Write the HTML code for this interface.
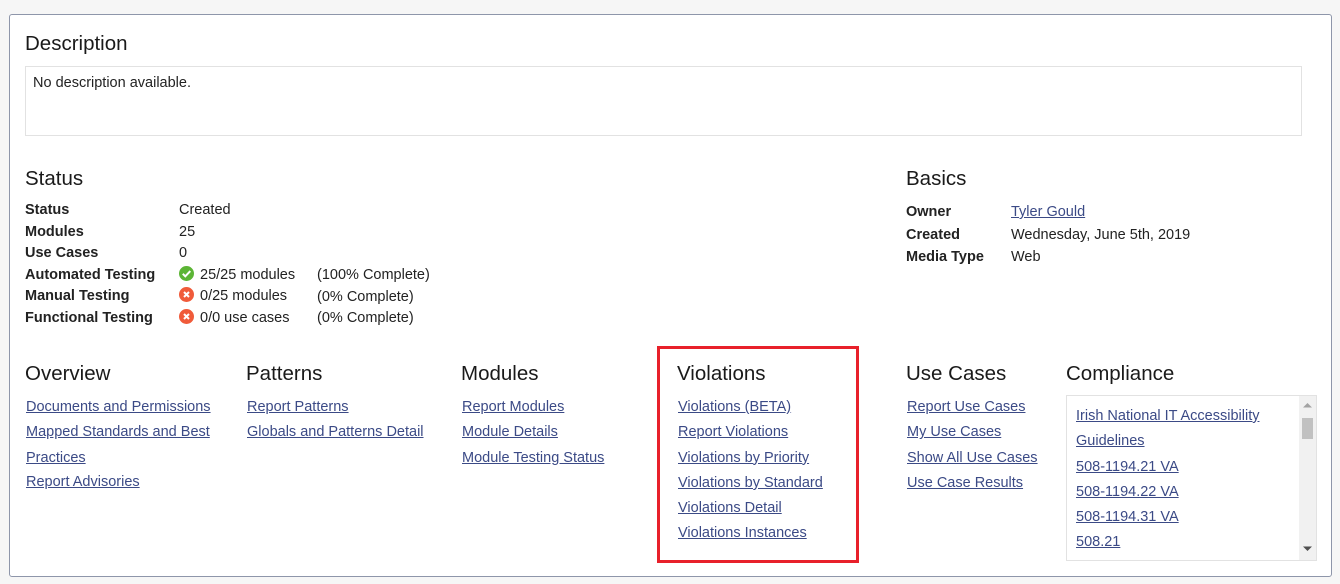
<!DOCTYPE html>
<html><head><meta charset="utf-8"><style>
body{margin:0;width:1340px;height:584px;background:#f6f6f6;font-family:"Liberation Sans",sans-serif;color:#222;position:relative;overflow:hidden;font-size:14.5px}
.card{position:absolute;left:9px;top:14px;width:1321px;height:561px;background:#fff;border:1px solid #8e96aa;border-radius:3px}
.a{position:absolute;white-space:nowrap}
h2{position:absolute;margin:0;font-weight:normal;font-size:20.5px;color:#1a1a1a;white-space:nowrap}
a{color:#3b4a86;text-decoration:underline}
.links a{display:block;height:25.3px;line-height:1}
b{font-weight:bold}
.ic{display:inline-block;width:15px;height:15px;border-radius:50%;vertical-align:-2px;margin-right:6px;position:relative}
</style></head><body>
<div class="card"></div>
<h2 style="left:25px;top:32px">Description</h2>
<div class="a" style="left:25px;top:66px;width:1275px;height:68px;border:1px solid #e2e2e2"></div>
<div class="a" style="left:33px;top:75px">No description available.</div>

<h2 style="left:25px;top:167px">Status</h2>
<div class="a" style="left:25px;top:200px;line-height:21.6px"><b>Status</b><br><b>Modules</b><br><b>Use Cases</b><br><b>Automated Testing</b><br><b>Manual Testing</b><br><b>Functional Testing</b></div>
<div class="a" style="left:179px;top:200px;line-height:21.6px">Created<br>25<br>0<br>
<span class="ic" style="background:#5cb535"><svg width="15" height="15" style="position:absolute;left:0;top:0"><path d="M3.8 7.8l2.5 2.5 5-5.2" stroke="#fff" stroke-width="2" fill="none"/></svg></span>25/25 modules<br>
<span class="ic" style="background:#f05b3a"><svg width="15" height="15" style="position:absolute;left:0;top:0"><path d="M5 5l5 5M10 5l-5 5" stroke="#fff" stroke-width="2"/></svg></span>0/25 modules<br>
<span class="ic" style="background:#f05b3a"><svg width="15" height="15" style="position:absolute;left:0;top:0"><path d="M5 5l5 5M10 5l-5 5" stroke="#fff" stroke-width="2"/></svg></span>0/0 use cases</div>
<div class="a" style="left:317px;top:265px;line-height:21.6px">(100% Complete)<br>(0% Complete)<br>(0% Complete)</div>

<h2 style="left:906px;top:167px">Basics</h2>
<div class="a" style="left:906px;top:201px;line-height:22.5px"><b>Owner</b><br><b>Created</b><br><b>Media Type</b></div>
<div class="a" style="left:1011px;top:201px;line-height:22.5px"><a>Tyler Gould</a><br>Wednesday, June 5th, 2019<br>Web</div>

<h2 style="left:25px;top:362px">Overview</h2>
<div class="a links" style="left:26px;top:400px"><a>Documents and Permissions</a><a>Mapped Standards and Best</a><a style="height:24.5px">Practices</a><a>Report Advisories</a></div>
<h2 style="left:246px;top:362px">Patterns</h2>
<div class="a links" style="left:247px;top:400px"><a>Report Patterns</a><a>Globals and Patterns Detail</a></div>
<h2 style="left:461px;top:362px">Modules</h2>
<div class="a links" style="left:462px;top:400px"><a>Report Modules</a><a>Module Details</a><a>Module Testing Status</a></div>
<div class="a" style="left:657px;top:346px;width:196px;height:211px;border:3px solid #e8202a"></div>
<h2 style="left:677px;top:362px">Violations</h2>
<div class="a links" style="left:678px;top:400px"><a>Violations (BETA)</a><a>Report Violations</a><a>Violations by Priority</a><a>Violations by Standard</a><a>Violations Detail</a><a>Violations Instances</a></div>
<h2 style="left:906px;top:362px">Use Cases</h2>
<div class="a links" style="left:907px;top:400px"><a>Report Use Cases</a><a>My Use Cases</a><a>Show All Use Cases</a><a>Use Case Results</a></div>
<h2 style="left:1066px;top:362px">Compliance</h2>
<div class="a" style="left:1066px;top:395px;width:249px;height:164px;border:1px solid #e2e2e2;overflow:hidden">
 <div class="links" style="position:absolute;left:9px;top:13px"><a>Irish National IT Accessibility</a><a>Guidelines</a><a>508-1194.21 VA</a><a>508-1194.22 VA</a><a>508-1194.31 VA</a><a>508.21</a><a>508.22</a></div>
 <div style="position:absolute;right:0;top:0;width:17px;height:164px;background:#f1f1f1"></div>
 <div style="position:absolute;right:3px;top:22px;width:11px;height:21px;background:#c1c1c1"></div>
 <svg style="position:absolute;right:3px;top:6px" width="11" height="6"><path d="M1 5.5L5.5 1 10 5.5z" fill="#a3a3a3"/></svg>
 <svg style="position:absolute;right:3px;top:150px" width="11" height="6"><path d="M1 .5L5.5 5 10 .5z" fill="#505050"/></svg>
</div>
</body></html>
